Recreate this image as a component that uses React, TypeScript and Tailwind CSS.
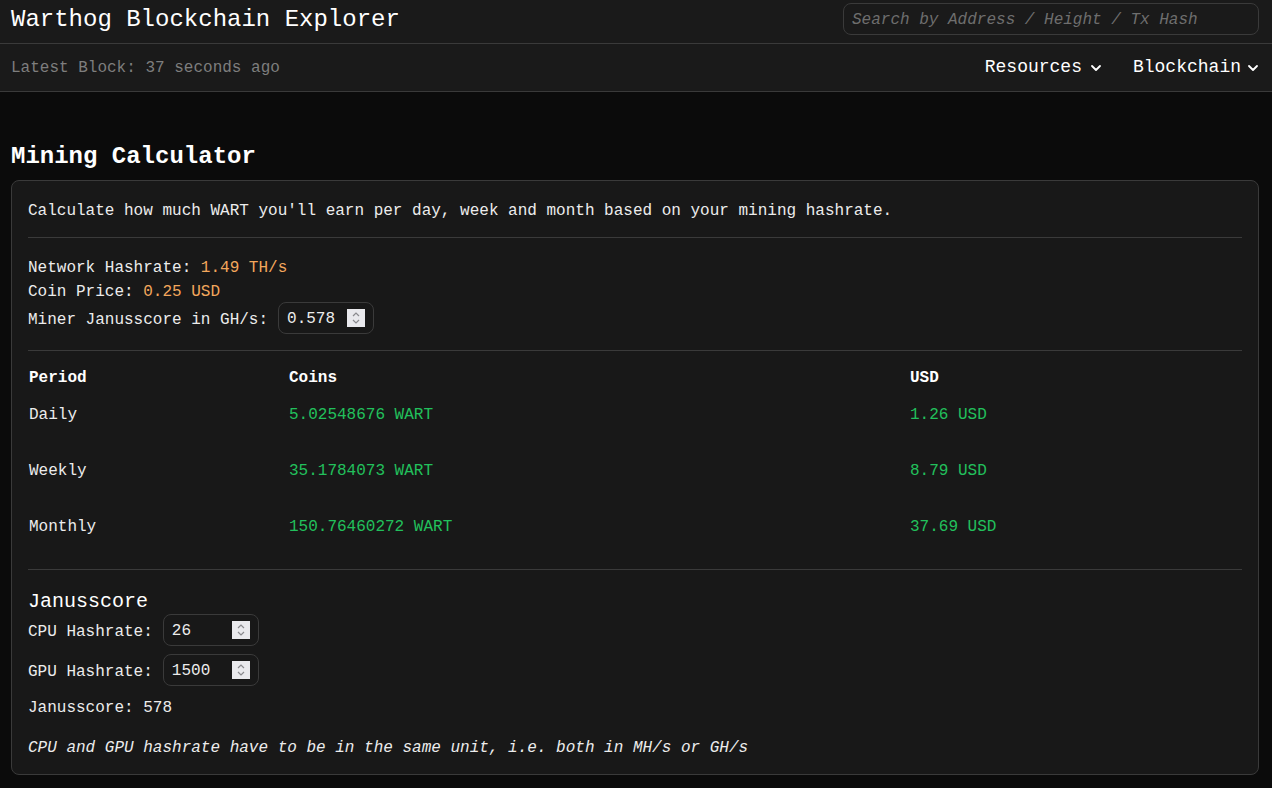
import React from "react";
import { ChevronDown } from "lucide-react";

const mono = { fontFamily: '"Liberation Mono", "DejaVu Sans Mono", monospace' };

function Spinner() {
  return (
    <span className="flex h-[18px] w-[18px] shrink-0 flex-col items-center justify-center bg-[#e9e9ed]">
      <svg width="10" height="14" viewBox="0 0 10 14" fill="none" stroke="#8a8a8e" strokeWidth="1.2">
        <path d="M2 5 L5 2 L8 5" />
        <path d="M2 9 L5 12 L8 9" />
      </svg>
    </span>
  );
}

function NumBox({ value }: { value: string }) {
  return (
    <div className="flex h-[32px] w-[96px] items-center rounded-lg border border-[#3a3a3a] bg-[#181818] pl-[8px] pr-[8px]">
      <input
        type="text"
        defaultValue={value}
        className="w-full min-w-0 translate-y-[1px] bg-transparent text-[16px] leading-6 text-[#ececec] outline-none"
        style={mono}
      />
      <Spinner />
    </div>
  );
}

const T = "translate-y-[2px]";

export default function App() {
  const rows = [
    { p: "Daily", c: "5.02548676 WART", u: "1.26 USD" },
    { p: "Weekly", c: "35.1784073 WART", u: "8.79 USD" },
    { p: "Monthly", c: "150.76460272 WART", u: "37.69 USD" },
  ];
  return (
    <div className="min-h-[788px] bg-[#0b0b0b] text-[#ececec]" style={mono}>
      <header className="bg-[#1a1a1a]">
        <div className="flex h-[44px] items-start justify-between border-b border-[#3a3a3a] pl-[11px] pr-[13px]">
          <h1 className="mt-[4px] text-[24px] leading-8 text-white">Warthog Blockchain Explorer</h1>
          <input
            type="text"
            placeholder="Search by Address / Height / Tx Hash"
            className="mt-[3px] h-[32px] w-[416px] rounded-lg border border-[#3a3a3a] bg-[#1a1a1a] px-[8px] pt-[2px] text-[16px] italic text-[#ececec] outline-none placeholder:text-[#6e6e6e]"
            style={mono}
          />
        </div>
        <div className="flex h-[48px] items-center border-b border-[#3a3a3a] pl-[11px] pr-[11px]">
          <span className="text-[16px] leading-6 text-[#7e7e7e]">Latest Block: 37 seconds ago</span>
          <div className="mb-[2px] ml-auto flex items-center gap-[29px] text-[18px] leading-7 text-white">
            <span className="flex items-center">
              Resources
              <ChevronDown size={16} strokeWidth={2.75} className="ml-[6px] mt-[2px]" />
            </span>
            <span className="flex items-center">
              Blockchain
              <ChevronDown size={16} strokeWidth={2.75} className="ml-[4px] mt-[2px]" />
            </span>
          </div>
        </div>
      </header>

      <main className="pl-[11px] pr-[13px] pt-[47px]">
        <h2 className={`mb-[9px] text-[24px] font-bold leading-8 text-white ${T}`}>Mining Calculator</h2>
        <div className="rounded-lg border border-[#3a3a3a] bg-[#181818] px-[16px] py-[16px] text-[16px] leading-6">
          <p className={T}>Calculate how much WART you'll earn per day, week and month based on your mining hashrate.</p>
          <hr className="my-[16px] border-[#3a3a3a]" />
          <div className={T}>
            Network Hashrate: <span className="text-[#f3a75c]">1.49 TH/s</span>
          </div>
          <div className={T}>
            Coin Price: <span className="text-[#f3a75c]">0.25 USD</span>
          </div>
          <div className="flex h-[32px] items-center">
            <span className={T}>Miner Janusscore in GH/s:</span>
            <span className="ml-[10px]">
              <NumBox value="0.578" />
            </span>
          </div>
          <hr className="my-[16px] border-[#3a3a3a]" />

          <div className={`flex h-[18px] items-center pl-[1px] font-bold text-white ${T}`}>
            <div className="w-[260px]">Period</div>
            <div className="w-[621px]">Coins</div>
            <div>USD</div>
          </div>
          {rows.map((r) => (
            <div key={r.p} className={`flex h-[56px] items-center pl-[1px] ${T}`}>
              <div className="w-[260px]">{r.p}</div>
              <div className="w-[621px] text-[#22c05c]">{r.c}</div>
              <div className="text-[#22c05c]">{r.u}</div>
            </div>
          ))}

          <hr className="my-[16px] border-[#3a3a3a]" />
          <h3 className={`text-[20px] leading-7 text-white ${T}`}>Janusscore</h3>
          <div className="flex h-[32px] items-center">
            <span className={T}>CPU Hashrate:</span>
            <span className="ml-[10px]">
              <NumBox value="26" />
            </span>
          </div>
          <div className="mt-[8px] flex h-[32px] items-center">
            <span className={T}>GPU Hashrate:</span>
            <span className="ml-[10px]">
              <NumBox value="1500" />
            </span>
          </div>
          <div className={`mt-[8px] ${T}`}>Janusscore: 578</div>
          <p className={`mt-[16px] italic ${T}`}>CPU and GPU hashrate have to be in the same unit, i.e. both in MH/s or GH/s</p>
        </div>
      </main>
    </div>
  );
}
